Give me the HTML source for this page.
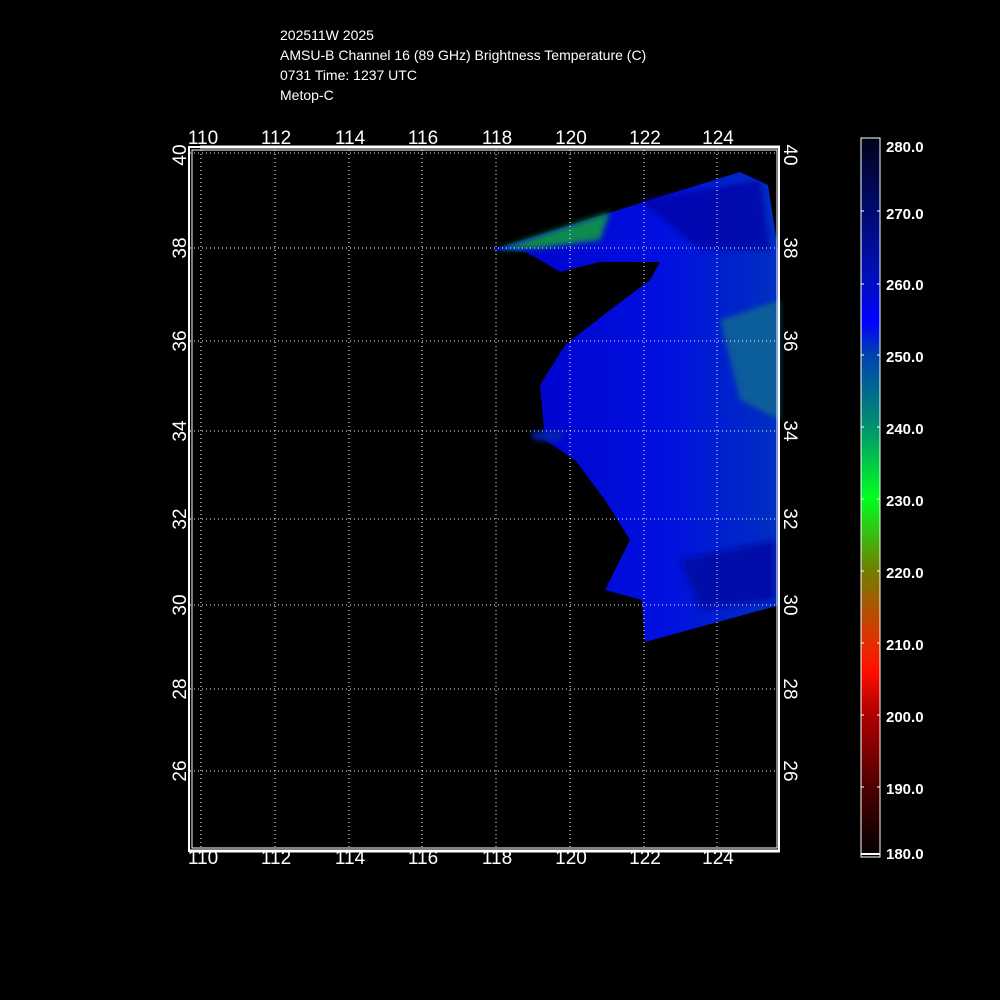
<!DOCTYPE html>
<html><head><style>
body{margin:0;background:#000;width:1000px;height:1000px;overflow:hidden;font-family:"Liberation Sans",sans-serif;color:#fff}
.t{position:absolute;left:280px;font-size:14px;line-height:20px}
</style></head><body>
<div class="t" style="top:25px">202511W 2025<br>AMSU-B Channel 16 (89 GHz) Brightness Temperature (C)<br>0731 Time: 1237 UTC<br>Metop-C</div>
<svg width="1000" height="1000" style="position:absolute;left:0;top:0" font-family="Liberation Sans, sans-serif">
<defs>
<linearGradient id="cb" x1="0" y1="0" x2="0" y2="1">
<stop offset="0" stop-color="#000418"/>
<stop offset="0.10" stop-color="#000a70"/>
<stop offset="0.20" stop-color="#0010c0"/>
<stop offset="0.255" stop-color="#0000ff"/>
<stop offset="0.30" stop-color="#0040b0"/>
<stop offset="0.40" stop-color="#009070"/>
<stop offset="0.50" stop-color="#00ff20"/>
<stop offset="0.60" stop-color="#708000"/>
<stop offset="0.70" stop-color="#e03000"/>
<stop offset="0.74" stop-color="#ff1000"/>
<stop offset="0.80" stop-color="#b00000"/>
<stop offset="0.90" stop-color="#500000"/>
<stop offset="1" stop-color="#000000"/>
</linearGradient>
<linearGradient id="d" x1="0" y1="0" x2="1" y2="0">
<stop offset="0" stop-color="#0000c8"/><stop offset="0.6" stop-color="#0010e0"/><stop offset="1" stop-color="#0030c0"/>
</linearGradient>
<filter id="bl"><feGaussianBlur stdDeviation="3"/></filter>
</defs>
<!-- data -->
<path d="M490,250 L740,172 L768,185 L780,262 L780,605 L645,642 L642,600 L605,590 L630,540 L605,500 L575,460 L545,440 L540,385 L565,345 L610,310 L650,280 L660,262 L600,262 L560,272 L540,260 L525,252 Z" fill="url(#d)"/>
<g filter="url(#bl)">
<path d="M495,250 L610,212 L600,240 L540,248 Z" fill="#0a8a50"/>
<path d="M720,320 L780,300 L780,420 L740,400 Z" fill="#0a6a90" opacity="0.8"/>
<path d="M680,560 L775,540 L775,600 L700,610 Z" fill="#0010a8"/>
<path d="M640,200 L760,180 L770,250 L700,250 Z" fill="#0008a0" opacity="0.7"/>
<path d="M530,432 L565,430 L560,442 L535,440 Z" fill="#0020b0"/>
</g>
<!-- grid -->
<g stroke="#fff" stroke-dasharray="1,3" stroke-width="1">
<line x1="201" y1="150" x2="201" y2="848"/><line x1="275" y1="150" x2="275" y2="848"/><line x1="349" y1="150" x2="349" y2="848"/><line x1="422" y1="150" x2="422" y2="848"/><line x1="496" y1="150" x2="496" y2="848"/><line x1="570" y1="150" x2="570" y2="848"/><line x1="644" y1="150" x2="644" y2="848"/><line x1="717" y1="150" x2="717" y2="848"/>
<line x1="190" y1="153" x2="778" y2="153"/><line x1="190" y1="248" x2="778" y2="248"/><line x1="190" y1="341" x2="778" y2="341"/><line x1="190" y1="431" x2="778" y2="431"/><line x1="190" y1="519" x2="778" y2="519"/><line x1="190" y1="605" x2="778" y2="605"/><line x1="190" y1="689" x2="778" y2="689"/><line x1="190" y1="771" x2="778" y2="771"/>
</g>
<!-- frame -->
<rect x="189" y="147" width="590" height="704" fill="none" stroke="#fff" stroke-width="2"/>
<rect x="192" y="150" width="585" height="698" fill="none" stroke="#fff" stroke-width="1"/>
<line x1="200" y1="147" x2="780" y2="147" stroke="#fff" stroke-width="3"/>
<line x1="189" y1="851" x2="780" y2="851" stroke="#fff" stroke-width="3"/>
<g fill="#fff" font-size="19" text-anchor="middle">
<text x="203" y="144">110</text><text x="276" y="144">112</text><text x="350" y="144">114</text><text x="423" y="144">116</text><text x="497" y="144">118</text><text x="571" y="144">120</text><text x="645" y="144">122</text><text x="718" y="144">124</text>
<text x="203" y="864">110</text><text x="276" y="864">112</text><text x="350" y="864">114</text><text x="423" y="864">116</text><text x="497" y="864">118</text><text x="571" y="864">120</text><text x="645" y="864">122</text><text x="718" y="864">124</text>
<g transform="rotate(-90)">
<text x="-155" y="186">40</text><text x="-248" y="186">38</text><text x="-341" y="186">36</text><text x="-431" y="186">34</text><text x="-519" y="186">32</text><text x="-605" y="186">30</text><text x="-689" y="186">28</text><text x="-771" y="186">26</text>
</g>
<g transform="rotate(90)">
<text x="155" y="-784">40</text><text x="248" y="-784">38</text><text x="341" y="-784">36</text><text x="431" y="-784">34</text><text x="519" y="-784">32</text><text x="605" y="-784">30</text><text x="689" y="-784">28</text><text x="771" y="-784">26</text>
</g>
</g>
<!-- colorbar -->
<rect x="861" y="138" width="19" height="719" fill="url(#cb)" stroke="#fff" stroke-width="1"/>
<line x1="861" y1="854" x2="880" y2="854" stroke="#fff" stroke-width="2"/>
<g fill="#fff" font-size="15" font-weight="bold">
<text x="886" y="152">280.0</text><text x="886" y="219">270.0</text><text x="886" y="290">260.0</text><text x="886" y="362">250.0</text><text x="886" y="434">240.0</text><text x="886" y="506">230.0</text><text x="886" y="578">220.0</text><text x="886" y="650">210.0</text><text x="886" y="722">200.0</text><text x="886" y="794">190.0</text><text x="886" y="859">180.0</text>
</g>
<g stroke="#fff">
<line x1="861" y1="211" x2="864" y2="211"/><line x1="877" y1="211" x2="880" y2="211"/>
<line x1="861" y1="284" x2="864" y2="284"/><line x1="877" y1="284" x2="880" y2="284"/>
<line x1="861" y1="355" x2="864" y2="355"/><line x1="877" y1="355" x2="880" y2="355"/>
<line x1="861" y1="427" x2="864" y2="427"/><line x1="877" y1="427" x2="880" y2="427"/>
<line x1="861" y1="499" x2="864" y2="499"/><line x1="877" y1="499" x2="880" y2="499"/>
<line x1="861" y1="571" x2="864" y2="571"/><line x1="877" y1="571" x2="880" y2="571"/>
<line x1="861" y1="643" x2="864" y2="643"/><line x1="877" y1="643" x2="880" y2="643"/>
<line x1="861" y1="715" x2="864" y2="715"/><line x1="877" y1="715" x2="880" y2="715"/>
<line x1="861" y1="787" x2="864" y2="787"/><line x1="877" y1="787" x2="880" y2="787"/>
</g>
</svg>
</body></html>
